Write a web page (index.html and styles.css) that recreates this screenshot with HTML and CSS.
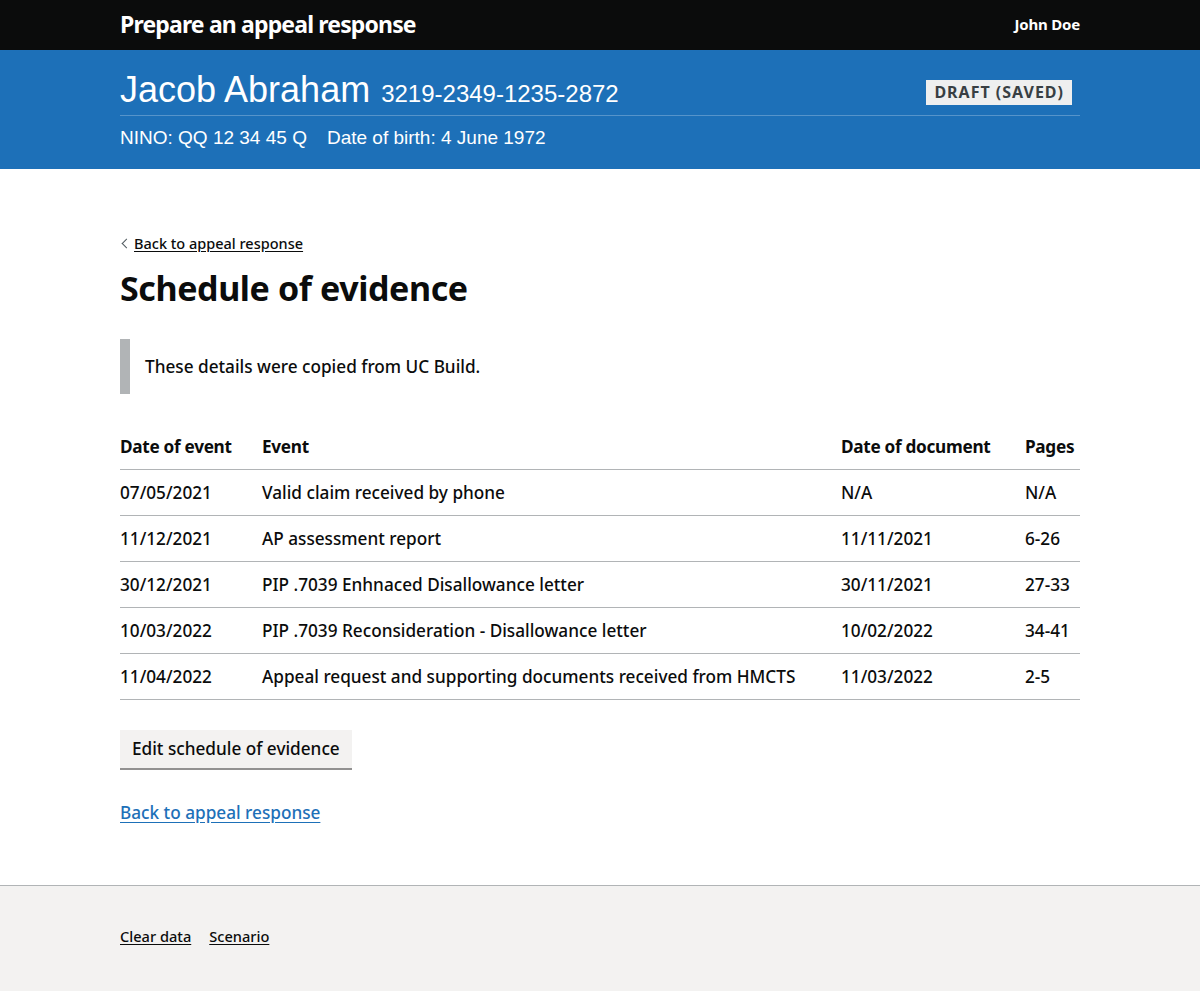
FILE: index.html
```html
<!DOCTYPE html>
<html lang="en">
<head>
<meta charset="utf-8">
<title>Schedule of evidence</title>
<link rel="stylesheet" href="styles.css">
</head>
<body>
<header class="topbar">
  <div class="container topbar-inner">
    <span class="service">Prepare an appeal response</span>
    <span class="user">John Doe</span>
  </div>
</header>
<section class="banner">
  <div class="container">
    <div class="banner-top">
      <h2 class="claimant"><span class="claimant-name">Jacob Abraham</span><span class="claimant-ref">3219-2349-1235-2872</span></h2>
      <strong class="tag">Draft (saved)</strong>
    </div>
    <div class="banner-bottom">
      <span>NINO: QQ 12 34 45 Q</span>
      <span>Date of birth: 4 June 1972</span>
    </div>
  </div>
</section>
<main class="container main">
  <a class="back-link" href="#">Back to appeal response</a>
  <h1 class="heading">Schedule of evidence</h1>
  <div class="inset">These details were copied from UC Build.</div>
  <table class="table">
    <thead>
      <tr>
        <th class="c1">Date of event</th>
        <th class="c2">Event</th>
        <th class="c3">Date of document</th>
        <th class="c4">Pages</th>
      </tr>
    </thead>
    <tbody>
      <tr><td>07/05/2021</td><td>Valid claim received by phone</td><td>N/A</td><td>N/A</td></tr>
      <tr><td>11/12/2021</td><td>AP assessment report</td><td>11/11/2021</td><td>6-26</td></tr>
      <tr><td>30/12/2021</td><td>PIP .7039 Enhnaced Disallowance letter</td><td>30/11/2021</td><td>27-33</td></tr>
      <tr><td>10/03/2022</td><td>PIP .7039 Reconsideration - Disallowance letter</td><td>10/02/2022</td><td>34-41</td></tr>
      <tr><td>11/04/2022</td><td>Appeal request and supporting documents received from HMCTS</td><td>11/03/2022</td><td>2-5</td></tr>
    </tbody>
  </table>
  <button class="button" type="button">Edit schedule of evidence</button>
  <p class="bottom-link"><a class="link" href="#">Back to appeal response</a></p>
</main>
<footer class="footer">
  <div class="container footer-links">
    <a href="#">Clear data</a>
    <a href="#">Scenario</a>
  </div>
</footer>
</body>
</html>
```

FILE: styles.css
```css
* { box-sizing: border-box; }
html, body { margin: 0; padding: 0; }
body {
  font-family: "Noto Sans", "Open Sans", Arial, sans-serif;
  font-weight: 500;
  color: #0b0c0c;
  background: #ffffff;
  min-height: 991px;
  display: flex;
  flex-direction: column;
}
.container {
  width: 960px;
  margin: 0 auto;
}
.topbar {
  background: #0b0c0c;
  color: #ffffff;
  height: 50px;
}
.topbar-inner {
  height: 50px;
  display: flex;
  align-items: center;
  justify-content: space-between;
}
.service {
  font-weight: 700;
  font-size: 23px;
  line-height: 30px;
  letter-spacing: -0.85px;
  margin-top: -2px;
}
.user {
  font-weight: 700;
  font-size: 15px;
  line-height: 20px;
  letter-spacing: -0.2px;
  margin-top: -2px;
}
.banner {
  background: #1d70b8;
  color: #ffffff;
  height: 119px;
  font-family: "Liberation Sans", Arial, sans-serif;
  font-weight: 400;
}
.banner-top {
  display: flex;
  justify-content: space-between;
  align-items: flex-start;
  padding-top: 22px;
  padding-bottom: 3px;
  border-bottom: 1px solid #5694ca;
}
.claimant {
  margin: 0;
  font-weight: 400;
  font-size: 36px;
  line-height: 36px;
}
.claimant-name { font-size: 36px; }
.claimant-ref { font-size: 24px; margin-left: 11px; }
.tag {
  font-family: "Noto Sans", Arial, sans-serif;
  background: #eeefef;
  color: #383f43;
  text-transform: uppercase;
  font-weight: 700;
  font-size: 16px;
  letter-spacing: 1px;
  line-height: 17px;
  padding: 4px 8px 4px 8px;
  margin-right: 8px;
  margin-top: 8px;
}
.banner-bottom {
  display: flex;
  gap: 20px;
  font-size: 19px;
  line-height: 22px;
  padding-top: 11px;
}
.main {
  flex: 1;
  padding-top: 63px;
  padding-bottom: 57px;
}
.back-link {
  display: inline-block;
  position: relative;
  font-size: 14.5px;
  line-height: 20px;
  color: #0b0c0c;
  text-decoration: underline;
  text-underline-offset: 2px;
  padding-left: 14px;
  margin-bottom: 15px;
}
.back-link::before {
  content: "";
  position: absolute;
  left: 3px;
  top: 7px;
  width: 6px;
  height: 6px;
  border-left: 1px solid #505a5f;
  border-bottom: 1px solid #505a5f;
  transform: rotate(45deg);
}
.heading {
  margin: 0 0 31px;
  font-size: 34px;
  line-height: 40px;
  font-weight: 700;
  letter-spacing: -0.4px;
}
.inset {
  border-left: 10px solid #b1b4b6;
  padding: 15px;
  font-size: 17.2px;
  line-height: 25px;
  margin-bottom: 30px;
}
.table {
  width: 100%;
  border-collapse: collapse;
  font-size: 17.2px;
  line-height: 25px;
  margin-bottom: 30px;
}
.table th, .table td {
  text-align: left;
  padding: 10px 20px 10px 0;
  border-bottom: 1px solid #b1b4b6;
  vertical-align: top;
}
.table th { font-weight: 700; letter-spacing: -0.3px; }
.table th:last-child, .table td:last-child { padding-right: 0; }
.c1 { width: 142px; }
.c2 { width: 579px; }
.c3 { width: 184px; }
.button {
  display: block;
  font-family: inherit;
  font-weight: 500;
  font-size: 17.2px;
  line-height: 22px;
  color: #0b0c0c;
  background: #f3f2f1;
  border: 0;
  border-radius: 0;
  box-shadow: 0 2px 0 #929191;
  padding: 8px 12px;
  margin: 0 0 32px;
  cursor: pointer;
}
.bottom-link {
  margin: 0;
  font-size: 17.2px;
  line-height: 25px;
}
.link {
  color: #1d70b8;
  text-decoration: underline;
  text-underline-offset: 3px;
}
.footer {
  background: #f3f2f1;
  border-top: 1px solid #b1b4b6;
  height: 106px;
  padding-top: 40px;
}
.footer-links {
  display: flex;
  gap: 18px;
  font-size: 14.6px;
  line-height: 20px;
}
.footer-links a {
  color: #0b0c0c;
  text-decoration: underline;
  text-underline-offset: 2px;
}
```
